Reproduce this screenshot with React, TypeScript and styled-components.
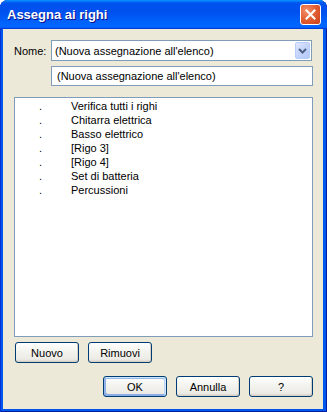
import styled, { createGlobalStyle } from 'styled-components'

const GlobalStyle = createGlobalStyle`
  html, body {
    margin: 0;
    padding: 0;
    background: #ffffff;
  }
  body {
    font-family: "Liberation Sans", Arial, sans-serif;
    font-size: 11px;
  }
`

const Frame = styled.div`
  width: 327px;
  height: 412px;
  box-sizing: border-box;
  display: flex;
  flex-direction: column;
  background: #0055ea;
  border-radius: 8px 8px 0 0;
  box-shadow: inset 1px 0 #0831d9, inset -1px 0 #001ea0, inset 0 -1px #001ea0;
  overflow: hidden;
`

const TitleBar = styled.div`
  height: 29px;
  flex: none;
  display: flex;
  align-items: center;
  justify-content: space-between;
  padding: 0 6px 0 7px;
  background: linear-gradient(
    180deg,
    #0997ff 0%,
    #0053ee 10%,
    #0050ee 40%,
    #0066ff 86%,
    #0066ff 92%,
    #005bff 95%,
    #003dd7 97%,
    #003dd7 100%
  );
`

const Title = styled.span`
  font-family: "Liberation Sans", Arial, sans-serif;
  font-weight: bold;
  font-size: 13px;
  color: #ffffff;
  text-shadow: 1px 1px #0f1089;
`

const CloseButton = styled.div`
  width: 21px;
  height: 21px;
  box-sizing: border-box;
  border: 1px solid #ffffff;
  border-radius: 3px;
  background: radial-gradient(circle at 30% 30%, #f2906a 0%, #e0592f 55%, #c8431b 100%);
  display: flex;
  align-items: center;
  justify-content: center;
`

const Body = styled.div`
  flex: 1;
  margin: 0 4px 3px 3px;
  background: #ece9d8;
  display: flex;
  flex-direction: column;
  padding: 11px 10px 12px 10px;
`

const FieldRow = styled.div`
  display: flex;
  align-items: center;
  gap: 7px;
`

const Label = styled.span`
  width: 31px;
  padding-left: 1px;
  box-sizing: border-box;
  color: #000;
`

const Combo = styled.div`
  flex: 1;
  height: 21px;
  box-sizing: border-box;
  border: 1px solid #7f9db9;
  background: #ffffff;
  display: flex;
  align-items: center;
  justify-content: space-between;
  padding: 1px 1px 1px 3px;
  margin-right: 1px;
`

const DropButton = styled.div`
  width: 15px;
  height: 17px;
  box-sizing: border-box;
  border: 1px solid #b9cdfb;
  border-radius: 2px;
  background: linear-gradient(135deg, #dfe8ff 0%, #c4d4fb 50%, #b3c8f9 100%);
  display: flex;
  align-items: center;
  justify-content: center;
`

const TextField = styled.div`
  margin: 5px 0 0 38px;
  height: 20px;
  box-sizing: border-box;
  border: 1px solid #7f9db9;
  background: #ffffff;
  display: flex;
  align-items: center;
  padding-left: 5px;
`

const ListBox = styled.div`
  margin: 11px 0 0 1px;
  height: 240px;
  box-sizing: border-box;
  border: 1px solid #7f9db9;
  background: #ffffff;
  padding-top: 1px;
  display: flex;
  flex-direction: column;
`

const ListRow = styled.div`
  height: 14px;
  display: flex;
  align-items: center;
  color: #000;
`

const Bullet = styled.span`
  width: 56px;
  padding-left: 24px;
  box-sizing: border-box;
`

const ButtonRow = styled.div<{ $right?: boolean }>`
  display: flex;
  gap: 9px;
  justify-content: ${p => (p.$right ? 'flex-end' : 'flex-start')};
  margin-top: ${p => (p.$right ? '13px' : '5px')};
  padding-left: ${p => (p.$right ? '0' : '2px')};
`

const Button = styled.div<{ $default?: boolean }>`
  width: 64px;
  height: 21px;
  box-sizing: border-box;
  border: 1px solid #003c74;
  border-radius: 3px;
  background: linear-gradient(180deg, #ffffff 0%, #f4f4f0 40%, #ecebe6 85%, #d6d0c5 100%);
  display: flex;
  align-items: center;
  justify-content: center;
  color: #000;
  box-shadow: ${p =>
    p.$default
      ? 'inset -1px 1px #cee7ff, inset 1px 2px #98b8ea, inset -2px 2px #bcd4f6, inset 1px -1px #89ade4, inset 2px -2px #89ade4'
      : 'inset -1px -1px #d6d0c5'};
`

const rows = [
  'Verifica tutti i righi',
  'Chitarra elettrica',
  'Basso elettrico',
  '[Rigo 3]',
  '[Rigo 4]',
  'Set di batteria',
  'Percussioni',
]

export default function App() {
  return (
    <>
      <GlobalStyle />
      <Frame>
        <TitleBar>
          <Title>Assegna ai righi</Title>
          <CloseButton>
            <svg width="11" height="11" viewBox="0 0 11 11">
              <path d="M1.5 1.5 L9.5 9.5 M9.5 1.5 L1.5 9.5" stroke="#ffffff" strokeWidth="2" strokeLinecap="square" />
            </svg>
          </CloseButton>
        </TitleBar>
        <Body>
          <FieldRow>
            <Label>Nome:</Label>
            <Combo>
              <span>(Nuova assegnazione all'elenco)</span>
              <DropButton>
                <svg width="9" height="6" viewBox="0 0 9 6">
                  <path d="M1 1 L4.5 4.5 L8 1" stroke="#4d6185" strokeWidth="2" fill="none" />
                </svg>
              </DropButton>
            </Combo>
          </FieldRow>
          <TextField>(Nuova assegnazione all'elenco)</TextField>
          <ListBox>
            {rows.map(r => (
              <ListRow key={r}>
                <Bullet>.</Bullet>
                <span>{r}</span>
              </ListRow>
            ))}
          </ListBox>
          <ButtonRow>
            <Button>Nuovo</Button>
            <Button>Rimuovi</Button>
          </ButtonRow>
          <ButtonRow $right>
            <Button $default>OK</Button>
            <Button>Annulla</Button>
            <Button>?</Button>
          </ButtonRow>
        </Body>
      </Frame>
    </>
  )
}
